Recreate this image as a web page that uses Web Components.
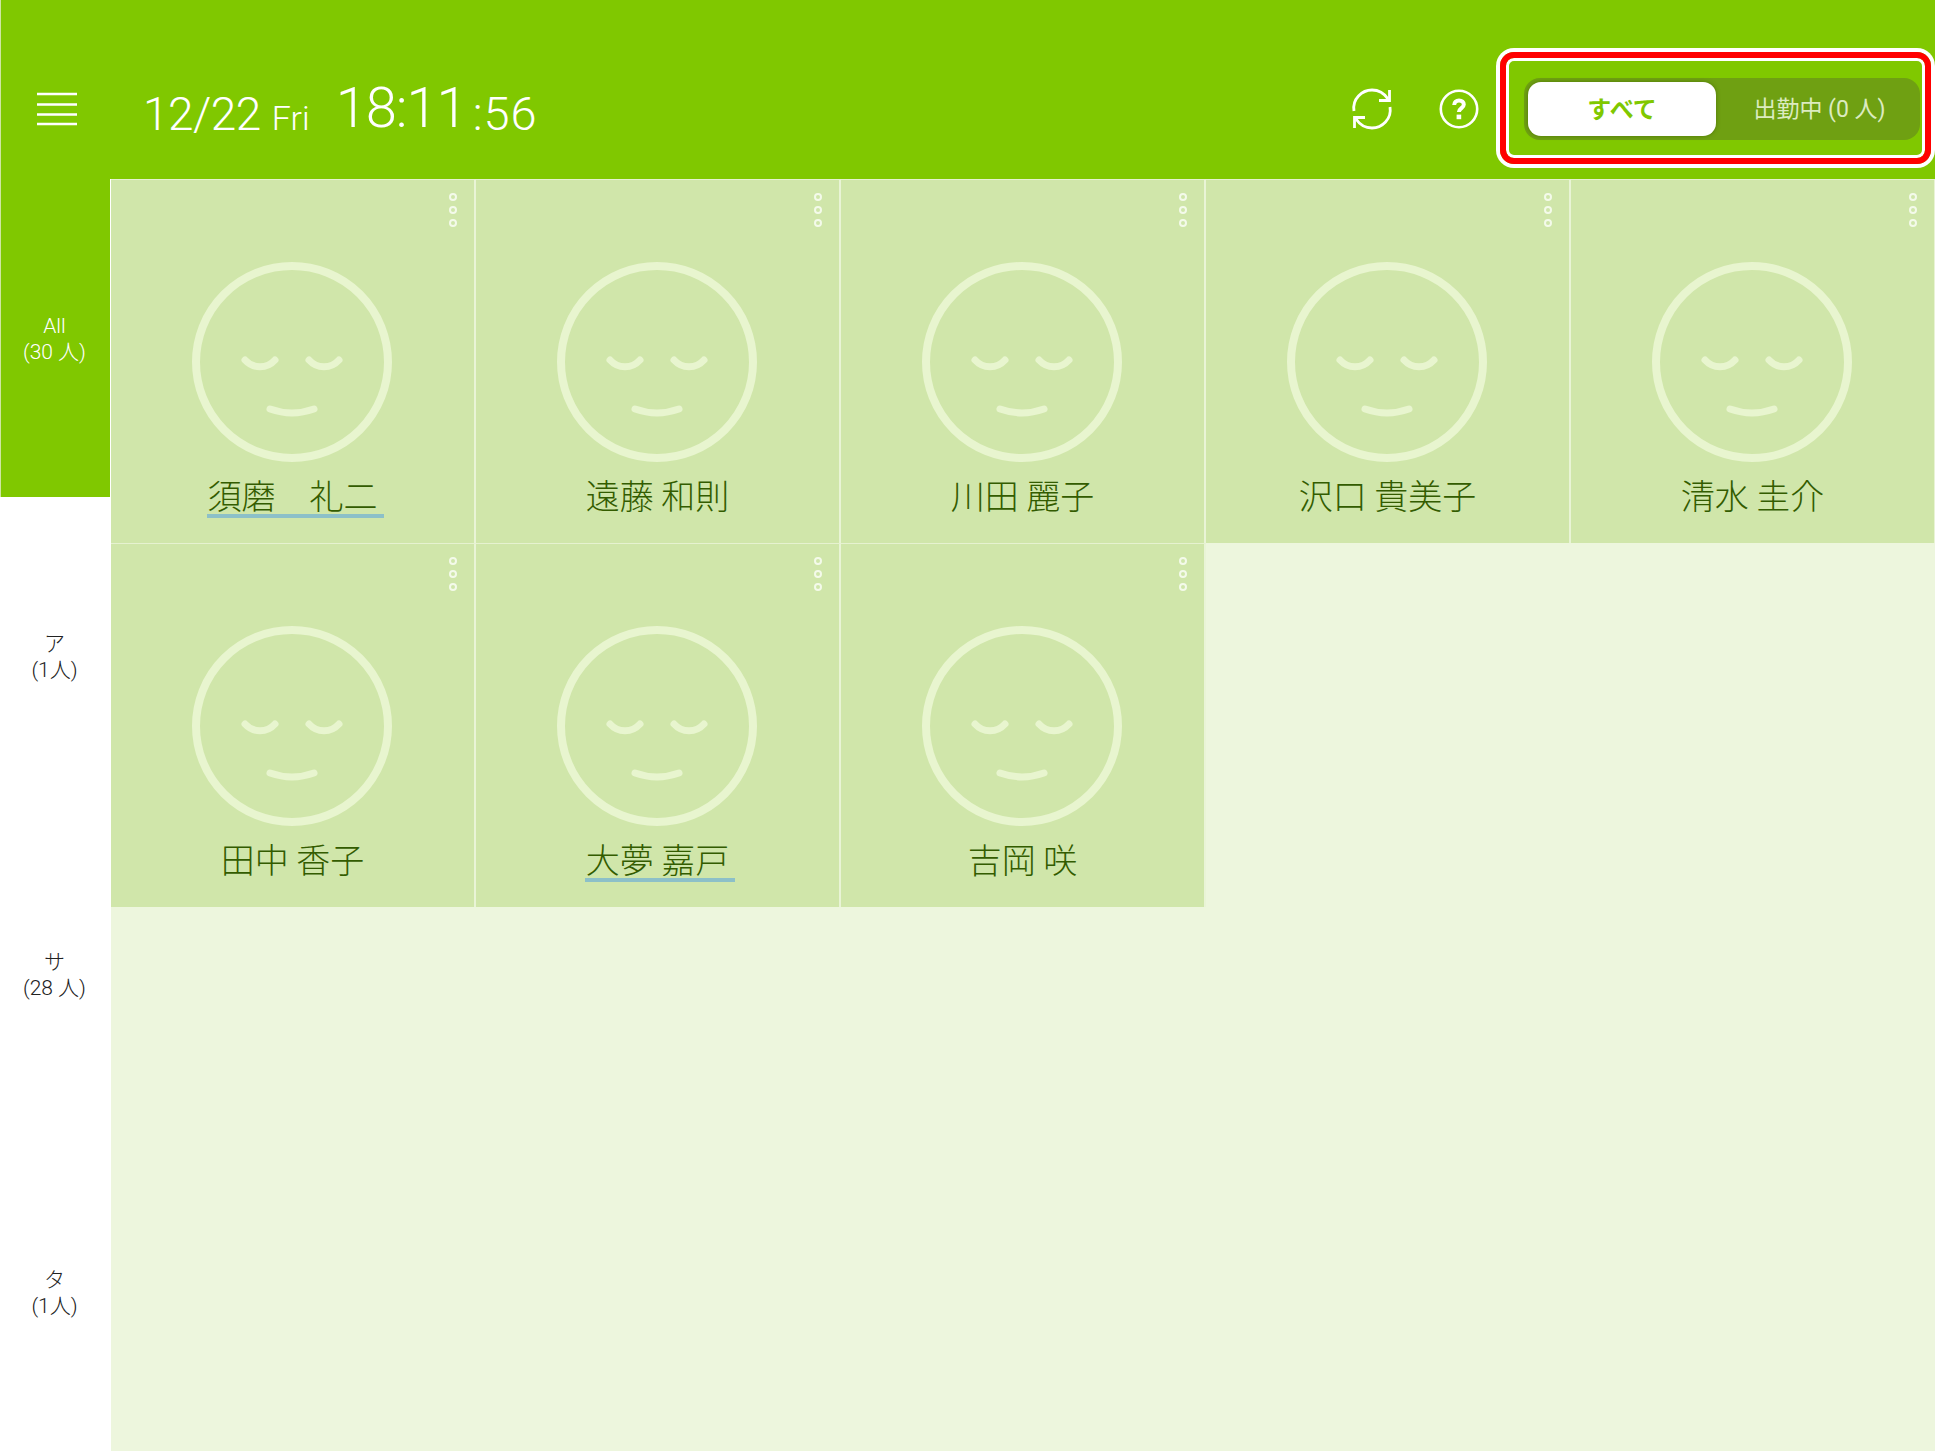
<!DOCTYPE html>
<html lang="ja">
<head>
<meta charset="utf-8">
<title>スタッフ一覧</title>
<style>
	html, body { margin: 0; height: 100%; background: #fff; overflow: hidden; }
	body { font-family: Roboto, "Noto Sans CJK JP", sans-serif; }
</style>
</head>
<body>
<app-shell>
	<app-header slot="header" date="12/22" day="Fri" time="18:11" sec=":56"></app-header>
	<side-rail slot="rail">
		<rail-tab active label="All" count="(30 人)"></rail-tab>
		<rail-tab label="ア" count="(1人)"></rail-tab>
		<rail-tab label="サ" count="(28 人)"></rail-tab>
		<rail-tab label="タ" count="(1人)"></rail-tab>
	</side-rail>
	<staff-grid slot="main">
		<staff-card name="須磨　礼二" marked></staff-card>
		<staff-card name="遠藤 和則"></staff-card>
		<staff-card name="川田 麗子"></staff-card>
		<staff-card name="沢口 貴美子"></staff-card>
		<staff-card name="清水 圭介"></staff-card>
		<staff-card name="田中 香子"></staff-card>
		<staff-card name="大夢 嘉戸" marked></staff-card>
		<staff-card name="吉岡 咲"></staff-card>
	</staff-grid>
</app-shell>

<script>
// AppShell 컴포넌트
class AppShell extends HTMLElement {
	constructor() {
		super();
		const shadow = this.attachShadow({ mode: 'open' });
		shadow.innerHTML = `
			<style>
				:host {
					display: grid;
					grid-template-columns: 110px 1fr;
					grid-template-rows: 179px 1fr;
					height: 100vh;
					overflow: hidden;
				}
				.head { grid-column: 1 / 3; display: block; }
				.main { min-width: 0; overflow: hidden; }
				.rail { min-height: 0; }
			</style>
			<div class="head"><slot name="header"></slot></div>
			<div class="rail"><slot name="rail"></slot></div>
			<div class="main"><slot name="main"></slot></div>
		`;
	}
}
customElements.define('app-shell', AppShell);


// AppHeader 컴포넌트
class AppHeader extends HTMLElement {
	constructor() {
		super();
		const shadow = this.attachShadow({ mode: 'open' });
		shadow.innerHTML = `
			<style>
				:host {
					display: flex;
					align-items: center;
					height: 179px;
					box-sizing: border-box;
					padding: 38px 15px 0 36px;
					border-left: 1px solid #cfe6a0;
					background: #80c800;
					color: #fff;
					font-family: Roboto, "Noto Sans CJK JP", sans-serif;
					font-weight: 300;
				}
				.menu { width: 40px; height: 34px; display: block; }
				.clock {
					display: flex;
					align-items: baseline;
					margin-left: 66px;
					white-space: nowrap;
					transform: translateY(2px);
				}
				.date { font-size: 46px; letter-spacing: -0.5px; }
				.day { font-size: 34px; margin-left: 11px; }
				.time { font-size: 56px; margin-left: 26px; letter-spacing: -1px; transform: translateY(-3px); }
				.sec { font-size: 47px; margin-left: 6px; letter-spacing: 1px; }
				.tools {
					display: flex;
					align-items: center;
					margin-left: auto;
				}
				.sync { width: 44px; height: 44px; display: block; }
				.help { width: 40px; height: 40px; display: block; margin-left: 45px; margin-right: 45px; }
			</style>
			<svg class="menu" viewBox="0 0 40 34" fill="none" stroke="#fff" stroke-width="2.4">
				<path d="M0 2H40M0 12.5H40M0 22.5H40M0 32H40"/>
			</svg>
			<div class="clock">
				<span class="date"></span><span class="day"></span><span class="time"></span><span class="sec"></span>
			</div>
			<div class="tools">
				<svg class="sync" viewBox="0 0 44 44" fill="none" stroke="#fff" stroke-width="2.8">
					<path d="M4 24C2 12 12 3 22 3c7 0 12 3 16 9"/>
					<path d="M29 13.5H39.5V3"/>
					<path d="M40 20C42 32 32 41 22 41c-7 0-12-3-16-9"/>
					<path d="M15 30.5H4.5V41"/>
				</svg>
				<svg class="help" viewBox="0 0 40 40" fill="none" stroke="#fff">
					<circle cx="20" cy="20" r="18.2" stroke-width="2.6"/>
					<path d="M15.2 16c0-2.8 2-4.6 4.8-4.6s4.8 1.7 4.8 4.1c0 3.6-4.9 3.6-4.9 7.6" stroke-width="4"/>
					<rect x="17.6" y="25.6" width="4.6" height="4.6" fill="#fff" stroke="none"/>
				</svg>
				<seg-toggle first="すべて" second="出勤中 (0 人)"></seg-toggle>
			</div>
		`;
		this.dateElement = shadow.querySelector('.date');
		this.dayElement = shadow.querySelector('.day');
		this.timeElement = shadow.querySelector('.time');
		this.secElement = shadow.querySelector('.sec');
	}

	connectedCallback() {
		this.dateElement.textContent = this.getAttribute('date');
		this.dayElement.textContent = this.getAttribute('day');
		this.timeElement.textContent = this.getAttribute('time');
		this.secElement.textContent = this.getAttribute('sec');
	}
}
customElements.define('app-header', AppHeader);


// SegToggle 컴포넌트
class SegToggle extends HTMLElement {
	constructor() {
		super();
		const shadow = this.attachShadow({ mode: 'open' });
		shadow.innerHTML = `
			<style>
				:host {
					display: flex;
					position: relative;
					width: 396px;
					height: 62px;
					box-sizing: border-box;
					padding: 4px;
					border-radius: 16px;
					background: #6fa012;
					font-family: "Noto Sans CJK JP", sans-serif;
				}
				.on {
					width: 188px;
					display: flex;
					align-items: center;
					justify-content: center;
					box-sizing: border-box;
					padding-bottom: 2px;
					border-radius: 13px;
					background: #fff;
					color: #80c800;
					font-size: 24px;
					font-weight: 700;
					box-shadow: 0 0 4px rgba(60, 90, 0, 0.6);
				}
				.off {
					flex: 1;
					display: flex;
					align-items: center;
					justify-content: center;
					box-sizing: border-box;
					padding: 0 0 3px 7px;
					color: #dcebc0;
					font-size: 23px;
					font-weight: 400;
					font-family: Roboto, "Noto Sans CJK JP", sans-serif;
				}
				/* 스크린샷의 빨간 강조 박스 */
				.mark {
					position: absolute;
					left: -24px;
					right: -11px;
					top: -26px;
					bottom: -24px;
					border: 6px solid #f00;
					border-radius: 14px;
					box-shadow: 0 0 0 4px #fff, inset 0 0 0 3px #fff;
					pointer-events: none;
				}
			</style>
			<div class="on"></div>
			<div class="off"></div>
			<div class="mark"></div>
		`;
		this.onElement = shadow.querySelector('.on');
		this.offElement = shadow.querySelector('.off');
	}

	connectedCallback() {
		this.onElement.textContent = this.getAttribute('first');
		this.offElement.textContent = this.getAttribute('second');
	}
}
customElements.define('seg-toggle', SegToggle);


// SideRail 컴포넌트
class SideRail extends HTMLElement {
	constructor() {
		super();
		const shadow = this.attachShadow({ mode: 'open' });
		shadow.innerHTML = `
			<style>
				:host {
					display: flex;
					flex-direction: column;
					height: 100%;
					background: #fff;
				}
			</style>
			<slot></slot>
		`;
	}
}
customElements.define('side-rail', SideRail);


// RailTab 컴포넌트
class RailTab extends HTMLElement {
	constructor() {
		super();
		const shadow = this.attachShadow({ mode: 'open' });
		shadow.innerHTML = `
			<style>
				:host {
					flex: 1;
					display: flex;
					flex-direction: column;
					align-items: center;
					justify-content: center;
					box-sizing: border-box;
					padding: 2px 2px 0 0;
					border-left: 1px solid transparent;
					color: #222;
					font-family: Roboto, "Noto Sans CJK JP", sans-serif;
					font-weight: 300;
					font-size: 21px;
					line-height: 26px;
				}
				:host([active]) {
					background: #80c800;
					border-left-color: #cfe6a0;
					color: #fff;
				}
			</style>
			<span class="label"></span>
			<span class="count"></span>
		`;
		this.labelElement = shadow.querySelector('.label');
		this.countElement = shadow.querySelector('.count');
	}

	connectedCallback() {
		this.labelElement.textContent = this.getAttribute('label');
		this.countElement.textContent = this.getAttribute('count');
	}
}
customElements.define('rail-tab', RailTab);


// StaffGrid 컴포넌트
class StaffGrid extends HTMLElement {
	constructor() {
		super();
		const shadow = this.attachShadow({ mode: 'open' });
		shadow.innerHTML = `
			<style>
				:host {
					display: grid;
					grid-template-columns: repeat(5, 365px);
					grid-auto-rows: 364px;
					align-content: start;
					height: 100%;
					margin-left: 1px;
					background: #edf6dd;
				}
			</style>
			<slot></slot>
		`;
	}
}
customElements.define('staff-grid', StaffGrid);


// StaffCard 컴포넌트
class StaffCard extends HTMLElement {
	constructor() {
		super();
		const shadow = this.attachShadow({ mode: 'open' });
		shadow.innerHTML = `
			<style>
				:host {
					display: flex;
					flex-direction: column;
					align-items: center;
					position: relative;
					box-sizing: border-box;
					padding-top: 82px;
					background: #d0e6aa;
					border-top: 1px solid #e6f2d0;
					border-right: 2px solid #e9f4d6;
					color: #335c00;
					font-family: "Noto Sans CJK JP", sans-serif;
					font-weight: 300;
					font-size: 34px;
				}
				.more {
					position: absolute;
					top: 12px;
					right: 16px;
					width: 10px;
					height: 36px;
				}
				.face { width: 200px; height: 200px; display: block; margin-right: 2px; }
				.name {
					position: relative;
					margin-top: 10px;
					line-height: 46px;
					white-space: nowrap;
				}
				:host([marked]) .name::after {
					content: "";
					position: absolute;
					left: -1px;
					right: -6px;
					bottom: 0;
					height: 4px;
					background: #8cc0c8;
				}
			</style>
			<svg class="more" viewBox="0 0 10 36" fill="none" stroke="#f4faea" stroke-width="2">
				<circle cx="5" cy="5" r="3"/>
				<circle cx="5" cy="18" r="3"/>
				<circle cx="5" cy="31" r="3"/>
			</svg>
			<svg class="face" viewBox="0 0 200 200" fill="none" stroke="#e8f5cf" stroke-linecap="round">
				<circle cx="100" cy="100" r="96" stroke-width="8"/>
				<path d="M53 98c8 9 22 9 30 0" stroke-width="7"/>
				<path d="M117 98c8 9 22 9 30 0" stroke-width="7"/>
				<path d="M78 147c14 5 30 5 44 0" stroke-width="7"/>
			</svg>
			<span class="name"></span>
		`;
		this.nameElement = shadow.querySelector('.name');
	}

	connectedCallback() {
		this.nameElement.textContent = this.getAttribute('name');
	}
}
customElements.define('staff-card', StaffCard);
</script>
</body>
</html>
